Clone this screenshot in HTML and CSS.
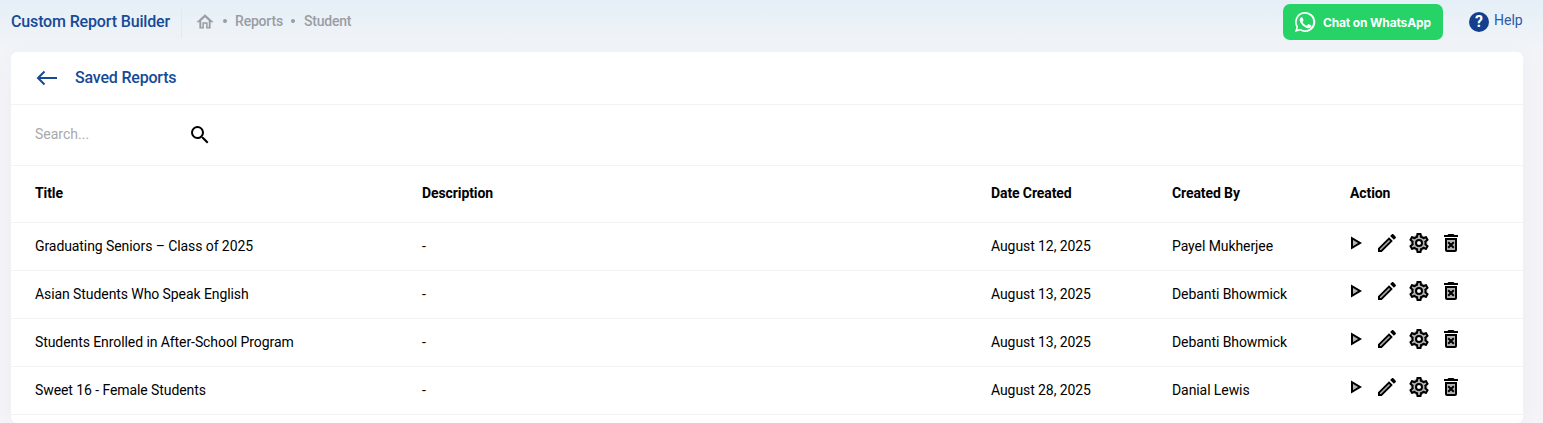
FILE: index.html
```html
<!DOCTYPE html>
<html>
    <head>
        <title>Custom Report Builder</title>
        <link rel="stylesheet" href="styles.css">
    </head>
    <body>
        <svg class="sprites" width="0" height="0">
            <symbol id="i-play" viewBox="0 0 24 24"><path fill="#b3b3b3" d="M10 9v6l5-3z"/><path fill-rule="evenodd" d="M8 5.500v13L19 12zm2 3.600L15 12l-5 2.900z"/></symbol>
            <symbol id="i-edit" viewBox="0 0 24 24"><path fill="#b3b3b3" d="M5 18.080V19h.92l9.060-9.060-.92-.92z"/><path d="M20.710 7.040c.39-.39.39-1.020 0-1.410l-2.340-2.340c-.2-.2-.45-.29-.71-.29s-.51.1-.7.29l-1.830 1.830 3.750 3.750 1.830-1.830zM3 17.250V21h3.750L17.810 9.940l-3.750-3.750L3 17.250zM5.920 19H5v-.92l9.060-9.060.92.92L5.920 19z"/></symbol>
            <symbol id="i-gear" viewBox="0 0 24 24"><circle cx="12" cy="12" r="8.500" fill="#b3b3b3"/><circle cx="12" cy="12" r="2" fill="#fff"/><path fill-rule="evenodd" d="M19.430 12.980c.04-.32.07-.64.07-.98s-.03-.66-.07-.98l2.110-1.650c.19-.15.24-.42.12-.64l-2-3.460c-.12-.22-.39-.3-.61-.22l-2.490 1c-.52-.4-1.080-.73-1.690-.98l-.38-2.650A.49.49 0 0 0 14 2h-4c-.25 0-.46.18-.49.42l-.38 2.650c-.61.25-1.170.59-1.690.98l-2.490-1c-.23-.09-.49 0-.61.22l-2 3.460c-.13.22-.07.49.12.64l2.110 1.650c-.04.32-.07.65-.07.98s.03.66.07.98l-2.110 1.650c-.19.15-.24.42-.12.64l2 3.460c.12.22.39.3.61.22l2.490-1c.52.4 1.080.73 1.690.98l.38 2.650c.03.24.24.42.49.42h4c.25 0 .46-.18.49-.42l.38-2.650c.61-.25 1.170-.59 1.690-.98l2.490 1c.23.09.49 0 .61-.22l2-3.460c.12-.22.07-.49-.12-.64l-2.110-1.650zM17.450 11.270c.04.31.05.52.05.73s-.02.43-.05.73l-.14 1.130.89.7 1.080.84-.7 1.210-1.270-.51-1.040-.42-.9.68c-.43.32-.84.56-1.250.73l-1.060.43-.16 1.130-.2 1.350h-1.400l-.19-1.350-.16-1.130-1.060-.43c-.43-.18-.83-.41-1.230-.71l-.91-.7-1.060.43-1.270.51-.7-1.210 1.080-.84.89-.7-.14-1.130c-.03-.31-.05-.54-.05-.74s.02-.43.05-.73l.14-1.130-.89-.7-1.080-.84.7-1.210 1.270.51 1.040.42.9-.68c.43-.32.84-.56 1.250-.73l1.060-.43.16-1.130.2-1.350h1.390l.19 1.350.16 1.130 1.060.43c.43.18.83.41 1.230.71l.91.7 1.060-.43 1.270-.51.7 1.210-1.070.85-.89.7.14 1.130zM12 8a4 4 0 1 0 0 8 4 4 0 0 0 0-8zm0 6a2 2 0 1 1 0-4 2 2 0 0 1 0 4z"/></symbol>
            <symbol id="i-trash" viewBox="0 0 24 24"><path fill="#b3b3b3" d="M8 9h8v10H8z"/><path d="M14.120 10.470L12 12.590l-2.130-2.120-1.410 1.410L10.590 14l-2.120 2.120 1.410 1.410L12 15.410l2.120 2.120 1.410-1.410L13.410 14l2.120-2.120zM15.500 4l-1-1h-5l-1 1H5v2h14V4zM6 19c0 1.100.9 2 2 2h8c1.100 0 2-.9 2-2V7H6v12zM8 9h8v10H8V9z"/></symbol>
        </svg>

        <header class="topbar">
            <div class="brand">Custom Report Builder</div>
            <nav class="crumbs">
                <svg class="home" viewBox="0 0 24 24"><path fill="#9a9da3" fill-rule="evenodd" d="M12 3 .5 13.500H4.500V22h6v-6.500h3V22h6v-8.500h4zm0 4 5 4.500V20h-1.500v-6.500h-7V20H7v-8.500z"/></svg>
                <span class="dot"></span>
                <span>Reports</span>
                <span class="dot"></span>
                <span>Student</span>
            </nav>
            <a class="whatsapp">
                <svg viewBox="0 0 24 24"><path fill="#fff" d="M12 2a10 10 0 0 0-8.600 15L2 22l5.200-1.400A10 10 0 1 0 12 2zm0 1.800a8.200 8.200 0 1 1-4.300 15.200l-.4-.2-3 .8.800-3-.2-.4A8.200 8.200 0 0 1 12 3.800zM8.500 7.300c-.2 0-.5.100-.8.400-.3.300-1 1-1 2.400s1 2.800 1.200 3c.1.200 2 3.100 4.900 4.300 2.400 1 2.900.8 3.400.7.500 0 1.700-.7 1.900-1.300.2-.7.2-1.200.2-1.300-.1-.2-.3-.2-.6-.4l-2-.9c-.3-.1-.5-.2-.7.100l-.9 1.200c-.2.200-.3.200-.6.100-.3-.2-1.200-.5-2.300-1.400-.9-.8-1.400-1.700-1.600-2-.2-.3 0-.5.100-.6l.5-.5.300-.5c.1-.2 0-.4 0-.5l-.9-2.200c-.2-.6-.5-.6-.7-.6z"/></svg>
                Chat on WhatsApp
            </a>
            <a class="help">
                <span class="help-icon">?</span>
                <span class="help-text">Help</span>
            </a>
        </header>

        <main class="card">
            <div class="card-head">
                <svg class="back" viewBox="0 0 24 24"><path fill="none" stroke="#164a96" stroke-width="2" d="M22 12H3.500M9.500 5.500 3 12l6.500 6.500"/></svg>
                <h1>Saved Reports</h1>
            </div>
            <div class="search-row">
                <input class="search" placeholder="Search...">
                <svg class="search-icon" viewBox="0 0 24 24"><path d="M15.500 14h-.79l-.28-.27A6.470 6.470 0 0 0 16 9.500 6.500 6.500 0 1 0 9.500 16c1.610 0 3.090-.59 4.230-1.570l.27.28v.79l5 4.990L20.490 19l-4.990-5zm-6 0C7.010 14 5 11.990 5 9.500S7.010 5 9.500 5 14 7.010 14 9.500 11.990 14 9.500 14z"/></svg>
            </div>
            <table class="reports">
                <thead>
                    <tr>
                        <th class="c-title">Title</th>
                        <th class="c-desc">Description</th>
                        <th class="c-date">Date Created</th>
                        <th class="c-by">Created By</th>
                        <th>Action</th>
                    </tr>
                </thead>
                <tbody>
                    <tr>
                        <td>Graduating Seniors – Class of 2025</td>
                        <td>-</td>
                        <td>August 12, 2025</td>
                        <td>Payel Mukherjee</td>
                        <td><div class="actions"><svg><use href="#i-play"/></svg><svg><use href="#i-edit"/></svg><svg><use href="#i-gear"/></svg><svg><use href="#i-trash"/></svg></div></td>
                    </tr>
                    <tr>
                        <td>Asian Students Who Speak English</td>
                        <td>-</td>
                        <td>August 13, 2025</td>
                        <td>Debanti Bhowmick</td>
                        <td><div class="actions"><svg><use href="#i-play"/></svg><svg><use href="#i-edit"/></svg><svg><use href="#i-gear"/></svg><svg><use href="#i-trash"/></svg></div></td>
                    </tr>
                    <tr>
                        <td>Students Enrolled in After-School Program</td>
                        <td>-</td>
                        <td>August 13, 2025</td>
                        <td>Debanti Bhowmick</td>
                        <td><div class="actions"><svg><use href="#i-play"/></svg><svg><use href="#i-edit"/></svg><svg><use href="#i-gear"/></svg><svg><use href="#i-trash"/></svg></div></td>
                    </tr>
                    <tr>
                        <td>Sweet 16 - Female Students</td>
                        <td>-</td>
                        <td>August 28, 2025</td>
                        <td>Danial Lewis</td>
                        <td><div class="actions"><svg><use href="#i-play"/></svg><svg><use href="#i-edit"/></svg><svg><use href="#i-gear"/></svg><svg><use href="#i-trash"/></svg></div></td>
                    </tr>
                </tbody>
            </table>
        </main>
    </body>
</html>
```

FILE: styles.css
```css
html, body{
    margin: 0;
    height: 423px;
    overflow: hidden;
}
body{
    font-family: Roboto, "Liberation Sans", sans-serif;
    font-size: 14px;
    color: #000;
    background: linear-gradient(180deg, #e5eff7 0, #f2f4f8 50px, #f4f3f7 100px);
}
.sprites{
    position: absolute;
}
.topbar{
    display: flex;
    align-items: flex-start;
    height: 52px;
    padding-left: 11px;
}
.brand{
    height: 30px;
    line-height: 28px;
    margin-top: 8px;
    padding-right: 11px;
    border-right: 1px solid #e4e8ef;
    font-size: 16px;
    font-weight: 500;
    letter-spacing: -0.15px;
    color: #164a96;
}
.crumbs{
    display: flex;
    align-items: center;
    gap: 8.5px;
    height: 26px;
    margin: 8px 0 0 14px;
    color: #9a9da3;
    font-weight: 500;
    letter-spacing: -0.2px;
}
.home{
    width: 18px;
    height: 18px;
}
.dot{
    width: 4px;
    height: 4px;
    border-radius: 50%;
    background: #9a9da3;
}
.whatsapp{
    display: flex;
    align-items: center;
    gap: 6px;
    width: 160px;
    height: 36px;
    box-sizing: border-box;
    margin: 4px 0 0 auto;
    padding-left: 10px;
    border-radius: 7px;
    background: #25d366;
    color: #fff;
    font-size: 12px;
    font-weight: 700;
    font-family: Inter, Roboto, sans-serif;
    letter-spacing: -0.15px;
}
.whatsapp svg{
    width: 24px;
    height: 24px;
}
.help{
    display: flex;
    gap: 5px;
    width: 74px;
    margin: 12px 0 0 26px;
    color: #2a5aa8;
}
.help-icon{
    width: 20px;
    height: 20px;
    border-radius: 50%;
    background: #133f8e;
    color: #fff;
    font-size: 16px;
    font-weight: 700;
    line-height: 20px;
    text-align: center;
}
.help-text{
    line-height: 17px;
}
.card{
    width: 1512px;
    margin-left: 11px;
    height: 371px;
    background: #fff;
    border-radius: 6px;
    box-shadow: 0 0 20px rgba(76,87,125,0.03);
}
.card-head{
    display: flex;
    align-items: center;
    gap: 16px;
    height: 52px;
    padding-left: 24px;
    border-bottom: 1px solid #f1f3f6;
}
.back{
    width: 24px;
    height: 24px;
}
.card-head h1{
    margin: 0 0 2px;
    font-size: 16px;
    font-weight: 500;
    letter-spacing: -0.2px;
    color: #164a96;
}
.search-row{
    display: flex;
    align-items: center;
    height: 60px;
    padding-left: 24px;
    border-bottom: 1px solid #f1f3f6;
}
.search{
    width: 150px;
    border: 0;
    outline: 0;
    padding: 0 0 2px;
    font: 14px Roboto, sans-serif;
}
.search::placeholder{
    color: #a9a9a9;
}
.search-icon{
    width: 24px;
    height: 24px;
    margin: 0 0 0 3px;
}
.reports{
    width: 100%;
    border-collapse: collapse;
    table-layout: fixed;
}
.reports th{
    box-sizing: border-box;
    height: 56px;
    padding: 0 0 2px;
    text-align: left;
    font-weight: 700;
    letter-spacing: -0.1px;
}
.reports td{
    box-sizing: border-box;
    height: 48px;
    padding: 0 0 1px;
    letter-spacing: -0.08px;
}
.reports tr{
    border-bottom: 1px solid #f1f3f6;
}
.reports th:first-child, .reports td:first-child{
    padding-left: 24px;
}
.c-title{
    width: 411px;
}
.c-desc{
    width: 569px;
}
.c-date{
    width: 181px;
}
.c-by{
    width: 178px;
}
.actions{
    display: flex;
    gap: 8px;
    margin: -5px 0 0 -7px;
}
.actions svg{
    width: 24px;
    height: 24px;
}
```
